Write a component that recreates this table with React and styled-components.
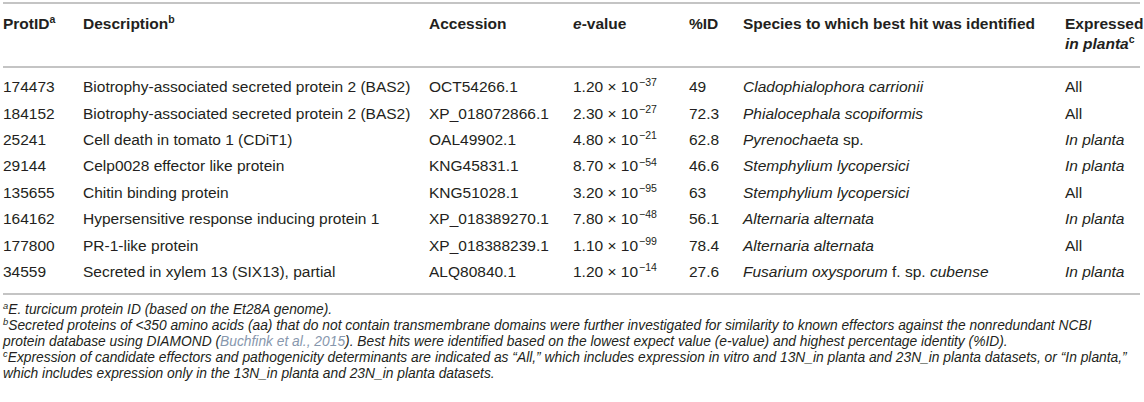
import React from "react";
import styled, { createGlobalStyle } from "styled-components";

const GlobalStyle = createGlobalStyle`
  html, body {
    margin: 0;
    padding: 0;
    background: #fff;
  }
  body {
    font-family: "Liberation Sans", Arial, sans-serif;
    color: #231f20;
  }
`;

const Wrapper = styled.div`
  padding: 2px 4px 0 3px;
  width: 1137px;
`;

const Table = styled.table`
  width: 100%;
  border-collapse: collapse;
  table-layout: fixed;
  font-size: 15.5px;
  border-top: 2px solid #c4c4c4;
  border-bottom: 2px solid #c4c4c4;
`;

const HeadRow = styled.tr`
  border-bottom: 2px solid #c4c4c4;
`;

const Th = styled.th`
  text-align: left;
  vertical-align: top;
  font-weight: bold;
  padding: 10px 0 12px;
  line-height: 20px;
`;

const Td = styled.td`
  padding: 0;
  height: 26.4px;
  line-height: 26px;
  white-space: nowrap;
  font-style: ${(p) => (p.$italic ? "italic" : "normal")};
`;

const Spacer = styled.tr`
  height: ${(p) => p.$h}px;
`;

const Sup = styled.sup`
  font-size: 0.68em;
  line-height: 0;
  vertical-align: 0.55em;
  font-weight: inherit;
  margin-left: ${(p) => (p.$gap ? "1px" : "0")};
`;

const Notes = styled.div`
  padding-top: 7px;
  font-size: 13.8px;
  font-style: italic;
  line-height: 16px;
  white-space: nowrap;
`;

const Note = styled.p`
  margin: 0;
`;

const Cite = styled.span`
  color: #8797ad;
`;

const rows = [
  ["174473", "Biotrophy-associated secreted protein 2 (BAS2)", "OCT54266.1", "1.20", "37", "49", <i>Cladophialophora carrionii</i>, "All"],
  ["184152", "Biotrophy-associated secreted protein 2 (BAS2)", "XP_018072866.1", "2.30", "27", "72.3", <i>Phialocephala scopiformis</i>, "All"],
  ["25241", "Cell death in tomato 1 (CDiT1)", "OAL49902.1", "4.80", "21", "62.8", <><i>Pyrenochaeta</i> sp.</>, "In planta"],
  ["29144", "Celp0028 effector like protein", "KNG45831.1", "8.70", "54", "46.6", <i>Stemphylium lycopersici</i>, "In planta"],
  ["135655", "Chitin binding protein", "KNG51028.1", "3.20", "95", "63", <i>Stemphylium lycopersici</i>, "All"],
  ["164162", "Hypersensitive response inducing protein 1", "XP_018389270.1", "7.80", "48", "56.1", <i>Alternaria alternata</i>, "In planta"],
  ["177800", "PR-1-like protein", "XP_018388239.1", "1.10", "99", "78.4", <i>Alternaria alternata</i>, "All"],
  ["34559", "Secreted in xylem 13 (SIX13), partial", "ALQ80840.1", "1.20", "14", "27.6", <><i>Fusarium oxysporum</i> f. sp. <i>cubense</i></>, "In planta"],
];

const widths = [80, 346, 144, 116, 54, 322, 75];

export default function App() {
  return (
    <Wrapper>
      <GlobalStyle />
      <Table>
        <colgroup>
          {widths.map((w, i) => (
            <col key={i} style={{ width: w }} />
          ))}
        </colgroup>
        <thead>
          <HeadRow>
            <Th>ProtID<Sup>a</Sup></Th>
            <Th>Description<Sup>b</Sup></Th>
            <Th>Accession</Th>
            <Th><i>e</i>-value</Th>
            <Th>%ID</Th>
            <Th>Species to which best hit was identified</Th>
            <Th>
              Expressed
              <br />
              <i>in planta</i>
              <Sup>c</Sup>
            </Th>
          </HeadRow>
        </thead>
        <tbody>
          <Spacer $h={7} />
          {rows.map((r) => (
            <tr key={r[0]}>
              <Td>{r[0]}</Td>
              <Td>{r[1]}</Td>
              <Td>{r[2]}</Td>
              <Td>
                {r[3]} × 10<Sup $gap>−{r[4]}</Sup>
              </Td>
              <Td>{r[5]}</Td>
              <Td>{r[6]}</Td>
              <Td $italic={r[7] !== "All"}>{r[7]}</Td>
            </tr>
          ))}
          <Spacer $h={9} />
        </tbody>
      </Table>
      <Notes>
        <Note>
          <Sup>a</Sup>E. turcicum protein ID (based on the Et28A genome).
        </Note>
        <Note>
          <Sup>b</Sup>Secreted proteins of &lt;350 amino acids (aa) that do not contain transmembrane domains were further investigated for similarity to known effectors against the nonredundant NCBI
          <br />
          protein database using DIAMOND (<Cite>Buchfink et al., 2015</Cite>). Best hits were identified based on the lowest expect value (e-value) and highest percentage identity (%ID).
        </Note>
        <Note>
          <Sup>c</Sup>Expression of candidate effectors and pathogenicity determinants are indicated as “All,” which includes expression in vitro and 13N_in planta and 23N_in planta datasets, or “In planta,”
          <br />
          which includes expression only in the 13N_in planta and 23N_in planta datasets.
        </Note>
      </Notes>
    </Wrapper>
  );
}
